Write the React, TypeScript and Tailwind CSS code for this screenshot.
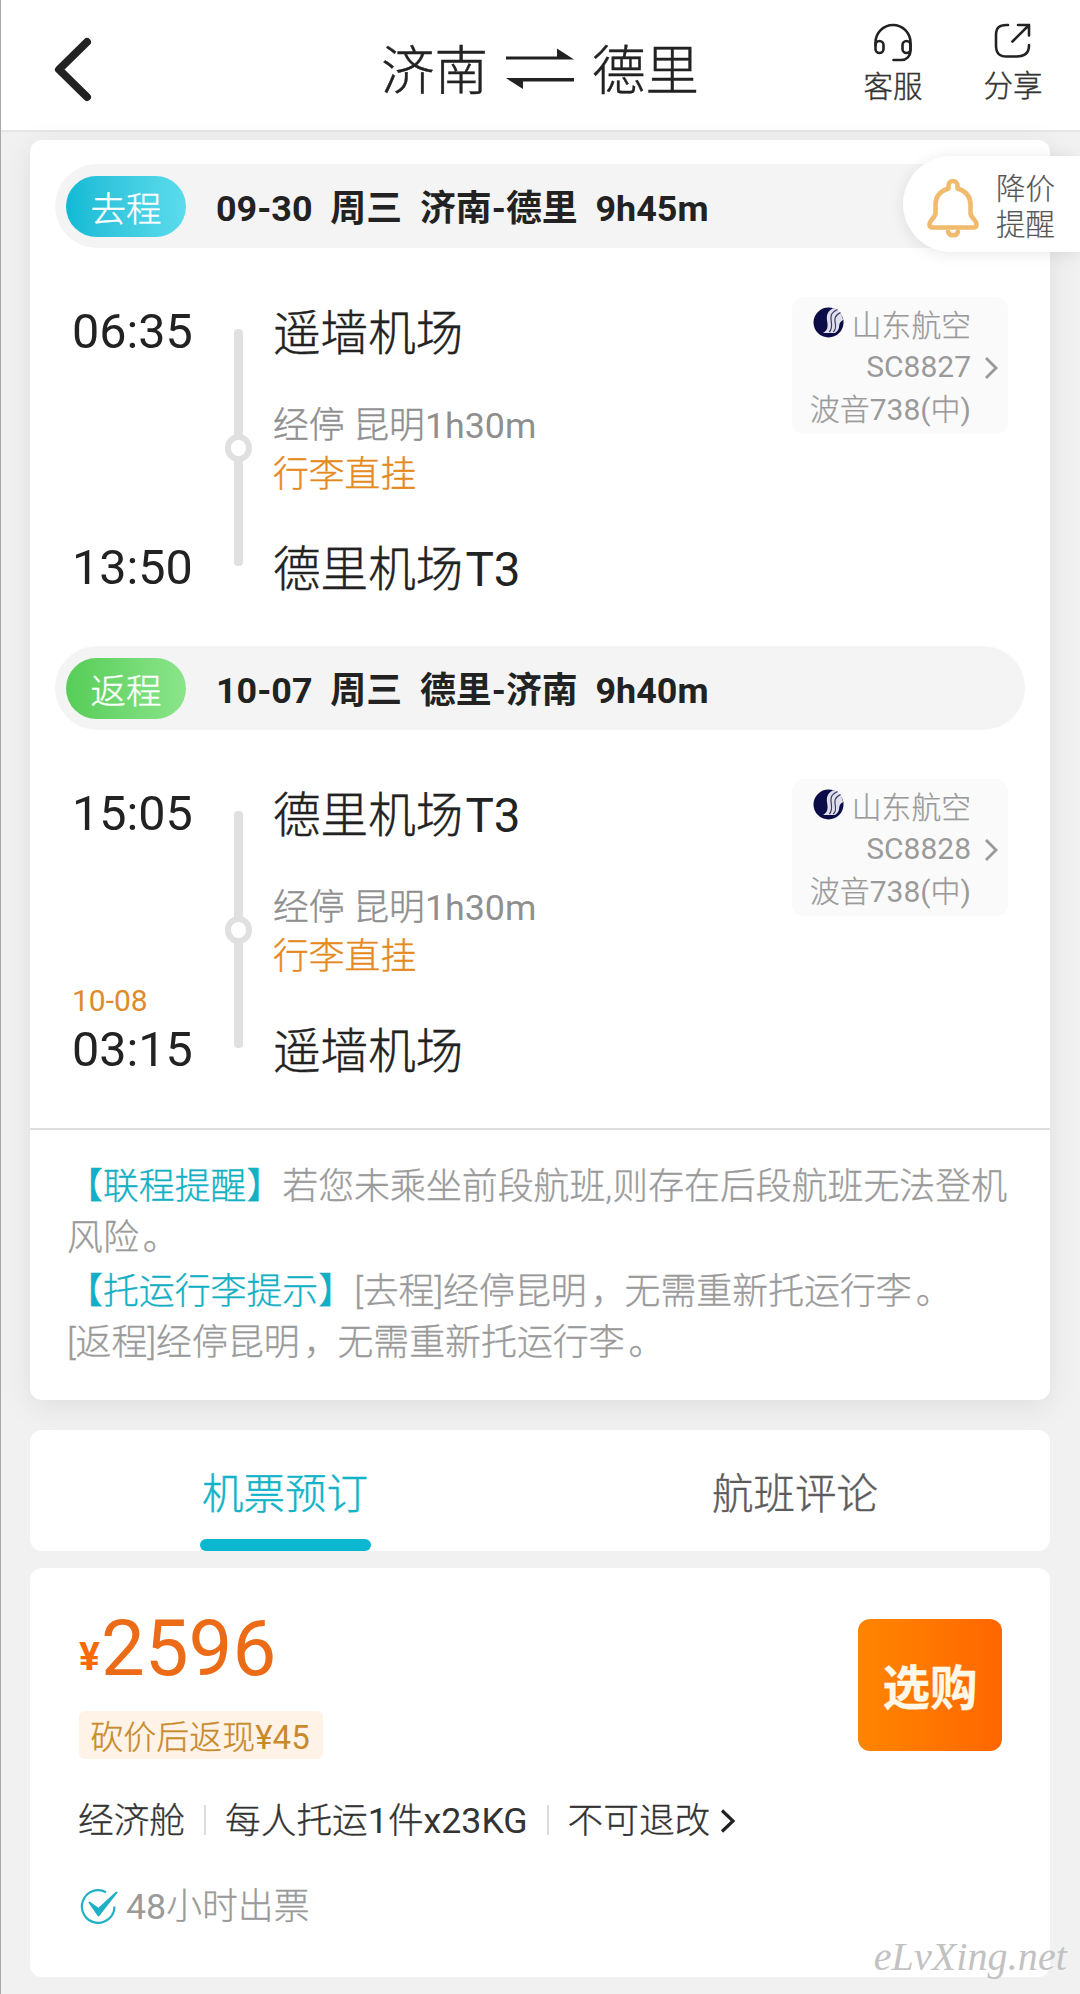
import React from "react";

type Flight = {
  badge: string;
  badgeClass: string;
  date: string;
  day: string;
  from: string;
  to: string;
  duration: string;
  depart: string;
  departAt: string;
  departTerminal?: string;
  arrive: string;
  arriveAt: string;
  arriveTerminal?: string;
  arriveDate?: string;
  flightNo: string;
};

const flights: Flight[] = [
  {
    badge: "去程",
    badgeClass: "bg-gradient-to-r from-[#0bbad5] to-[#5adcec]",
    date: "09-30",
    day: "周三",
    from: "济南",
    to: "德里",
    duration: "9h45m",
    depart: "06:35",
    departAt: "遥墙机场",
    arrive: "13:50",
    arriveAt: "德里机场",
    arriveTerminal: "T3",
    flightNo: "SC8827",
  },
  {
    badge: "返程",
    badgeClass: "bg-gradient-to-r from-[#56cd57] to-[#8ae58a]",
    date: "10-07",
    day: "周三",
    from: "德里",
    to: "济南",
    duration: "9h40m",
    depart: "15:05",
    departAt: "德里机场",
    departTerminal: "T3",
    arrive: "03:15",
    arriveAt: "遥墙机场",
    arriveDate: "10-08",
    flightNo: "SC8828",
  },
];

/* Latin letters and digits set beside the lighter Chinese text */
function L({ children }: { children: React.ReactNode }) {
  return <span className="font-normal [-webkit-text-stroke:0px]">{children}</span>;
}

/* Full-width punctuation, nudged towards the middle of its cell */
function P({ children }: { children: React.ReactNode }) {
  return <span className="mr-[-2px] pl-[4px]">{children}</span>;
}

function Header() {
  return (
    <header className="flex h-[132px] items-start border-b-2 border-[#e6e6e6] bg-white pl-[50px] font-light [-webkit-text-stroke:0.4px]">
      <svg className="mt-[35px] h-[69px] w-[42px] shrink-0" viewBox="0 0 42 69" fill="none" stroke="#222" strokeWidth="8" strokeLinecap="round" strokeLinejoin="round">
        <path d="M36 7 8 34.5 36 62" />
      </svg>
      <div className="mt-[42px] ml-[288px] flex h-[60px] items-center text-[53.5px] leading-[60px] text-[#222]">
        <span className="w-[107px]">济南</span>
        <svg className="mx-[18px] -mt-[7px] h-[42px] w-[68px]" viewBox="0 0 68 42" fill="#222">
          <path d="M0 8.4H51V0.5L68 11.600H0zM68 30.1H0L17 41V33.4H68z" />
        </svg>
        <span className="w-[107px]">德里</span>
      </div>
      <div className="mt-[21px] ml-[164px] flex w-[60px] shrink-0 flex-col items-center text-[29.5px] leading-[40px] text-[#333]">
        <svg className="h-[42px] w-[42px]" viewBox="0 0 42 42" fill="none" stroke="#222" strokeWidth="2.6" strokeLinecap="round">
          <path d="M3.500 24V21.500a17.500 17.500 0 0 1 35 0V30a9 9 0 0 1-9 9h-8" />
          <rect x="3.500" y="20" width="8" height="12" rx="4" />
          <rect x="30.500" y="20" width="8" height="12" rx="4" />
        </svg>
        <span className="mt-[4px]">客服</span>
      </div>
      <div className="mt-[21px] ml-[60px] flex w-[60px] shrink-0 flex-col items-center text-[29.5px] leading-[40px] text-[#333]">
        <svg className="h-[42px] w-[42px]" viewBox="0 0 42 42" fill="none" stroke="#222" strokeWidth="2.6" strokeLinecap="round" strokeLinejoin="round">
          <path d="M16 4h-1.500C7 4 4 7 4 14.500v10C4 32 7 35.500 14.500 35.500h10C33 35.500 37 32 37 24.500V24" />
          <path d="M26 4H37V14.500M37 4 20.500 20.500" />
        </svg>
        <span className="mt-[3px]">分享</span>
      </div>
    </header>
  );
}

function AirlineLogo() {
  return (
    <svg className="h-[31px] w-[31px]" viewBox="0 0 31 31">
      <circle cx="15.500" cy="15.500" r="15" fill="#0c0c48" />
      <path d="M20 1.200C13 5 13.500 10 14.300 15c.8 5.500 0 8.500-4.300 11h12c3-2 4.500-4 5.500-7l3-4C29.500 8 26 2 20 1.200z" fill="#e0e0ea" />
      <g fill="none" stroke="#3a3a6c" strokeWidth="1.200">
        <path d="M24.500 2.500C17 6 17.500 10 18.300 15s.3 7.500-2 10" />
        <path d="M27.500 5.500C21 9 21.500 12 22.300 16.500s.3 6-2 8.500" />
      </g>
      <path d="M30.300 13C26 15 26.500 18 26 20.500s-2.500 5-5 7.500c5-1.500 9.500-6.500 9.300-15z" fill="#0c0c48" />
    </svg>
  );
}

function AirlineBox({ flightNo }: { flightNo: string }) {
  return (
    <div className="mt-[49px] mr-[17px] ml-auto flex h-[137px] w-[216px] items-center rounded-xl bg-[#fafafa] pt-[3px] text-[29.8px] text-[#9a9a9a]">
      <div className="flex w-[179px] flex-col items-end font-light [-webkit-text-stroke:0.25px]">
        <div className="flex h-[43px] items-center gap-[8px] leading-[43px]">
          <div className="-mt-[4px]"><AirlineLogo /></div>
          <span className="pt-[2px]">山东航空</span>
        </div>
        <div className="h-[42px] text-[30px] leading-[41px]"><L>{flightNo}</L></div>
        <div className="h-[43px] text-[30px] leading-[43px]">波音<L>738(</L>中<L>)</L></div>
      </div>
      <svg className="mt-px ml-[13px] h-[24px] w-[16px]" viewBox="0 0 16 24" fill="none" stroke="#999" strokeWidth="2.800">
        <path d="M2 2 12 12 2 22" />
      </svg>
    </div>
  );
}

function FlightSegment({ f }: { f: Flight }) {
  return (
    <section className="px-[25px]">
      <div className="flex h-[84px] items-center rounded-full bg-[#f4f4f4] pl-[11px]">
        <div className={"flex h-[61px] w-[120px] items-center justify-center rounded-full pt-[9px] text-[35.5px] font-light text-white [-webkit-text-stroke:0.4px] " + f.badgeClass}>
          {f.badge}
        </div>
        <div className="ml-[30px] pt-[7px] text-[35.9px] font-bold whitespace-pre text-[#222]">
          {f.date + "  " + f.day + "  " + f.from + "-" + f.to + "  " + f.duration}
        </div>
      </div>
      <div className="flex h-[398px] items-start">
        <div className="mt-[59px] ml-[17px] flex h-[286px] w-[153px] flex-col justify-between text-[48.5px] leading-[50px] text-[#222]">
          <div>{f.depart}</div>
          <div>
            {f.arriveDate && <div className="mb-1 text-[30px] leading-[40px] text-[#e08a2a]">{f.arriveDate}</div>}
            <div>{f.arrive}</div>
          </div>
        </div>
        <div className="mt-[81px] flex h-[237px] w-[27px] flex-col items-center">
          <div className="w-[9px] flex-1 rounded-t-sm bg-[#e0e0e0]" />
          <div className="-my-px h-[28px] w-[27px] rounded-full border-[6px] border-[#e0e0e0] bg-white" />
          <div className="w-[9px] flex-1 rounded-b-sm bg-[#e0e0e0]" />
        </div>
        <div className="mt-[61px] ml-[21px] flex h-[286px] flex-col justify-between font-light text-[#222] [-webkit-text-stroke:0.4px]">
          <div className="text-[47.6px] leading-[50px]">{f.departAt}<L><span className="ml-[2px]">{f.departTerminal}</span></L></div>
          <div className="pb-[2px] text-[35.8px] leading-[49px]">
            <div className="text-[#8f8f8f]">经停 昆明<L>1h30m</L></div>
            <div className="text-[#e58a20]">行李直挂</div>
          </div>
          <div className="text-[47.6px] leading-[50px]">{f.arriveAt}<L><span className="ml-[2px]">{f.arriveTerminal}</span></L></div>
        </div>
        <AirlineBox flightNo={f.flightNo} />
      </div>
    </section>
  );
}

function Notices() {
  return (
    <div className="border-t-2 border-[#dedede] pt-[32px] pl-[37px] text-[35.9px] leading-[51px] font-light whitespace-nowrap text-[#9a9a9a] [-webkit-text-stroke:0.3px] [text-spacing-trim:space-all]">
      <div className="mb-[3px]">
        <p><span className="text-[#13b0c4]">【联程提醒】</span>若您未乘坐前段航班,则存在后段航班无法登机</p>
        <p>风险<P>。</P></p>
      </div>
      <p><span className="text-[#13b0c4]">【托运行李提示】</span>[去程]经停昆明<P>，</P>无需重新托运行李<P>。</P></p>
      <p>[返程]经停昆明<P>，</P>无需重新托运行李<P>。</P></p>
    </div>
  );
}

function PriceAlert() {
  return (
    <div className="absolute top-[156px] right-0 flex h-[96px] w-[177px] items-center rounded-l-full bg-white shadow-[0_2px_16px_rgba(0,0,0,0.09)]">
      <svg className="mt-[7px] ml-[22px] h-[62px] w-[56px]" viewBox="0 0 56 62" fill="none" stroke="#f0bb6c" strokeWidth="4.600" strokeLinecap="round" strokeLinejoin="round">
        <path d="M23.500 11.500V8.500a4.500 4.500 0 0 1 9 0V11.500C41 14 45.500 20 45.500 28V36C45.500 41 51.500 42.500 51.500 47.500 51.500 49.500 50.500 50.500 48.500 50.500H7.500C5.500 50.500 4.500 49.500 4.500 47.500 4.500 42.500 10.500 41 10.500 36V28C10.500 20 15 14 23.500 11.500Z" />
        <path d="M23 54.500c1 5 9 5 10 0" />
      </svg>
      <div className="ml-[15px] pt-[6px] text-[29.5px] leading-[36.5px] font-light text-[#555] [-webkit-text-stroke:0.2px]">
        <div>降价</div>
        <div>提醒</div>
      </div>
    </div>
  );
}

function Tabs() {
  return (
    <nav className="mx-[30px] mt-[30px] flex h-[121px] rounded-xl bg-white text-[41.5px] font-light [-webkit-text-stroke:0.4px]">
      <div className="flex flex-1 flex-col items-center justify-between pt-[37px] text-[#12b3c8]">
        <span className="leading-[56px]">机票预订</span>
        <div className="h-[12px] w-[171px] rounded-full bg-[#0bb8d0]" />
      </div>
      <div className="flex flex-1 flex-col items-center pt-[37px] text-[#5c5c5c]">
        <span className="leading-[56px]">航班评论</span>
      </div>
    </nav>
  );
}

function Offer() {
  return (
    <section className="mx-[30px] mt-[17px] flex h-[409px] items-start justify-between rounded-xl bg-white pr-[48px] pl-[48px] font-light [-webkit-text-stroke:0.3px]">
      <div>
        <div className="mt-[40px] ml-px flex h-[82px] items-baseline text-[#ec6b16] [-webkit-text-stroke:0px]">
          <span className="relative -top-[5px] text-[39px] leading-[82px] font-bold text-[#f96a05]">¥</span>
          <span className="ml-[1px] text-[78px] leading-[82px] font-normal">2596</span>
        </div>
        <div className="mt-[21px] ml-px flex h-[48px] w-[244px] items-center justify-center rounded-md bg-[#fef3e6] pt-[5px] pr-[2px] text-[33px] text-[#c98a2c]">
          <span className="leading-[43px]">砍价后返现<L>¥45</L></span>
        </div>
        <div className="mt-[37px] flex h-[50px] items-center text-[35.700px] leading-[50px] text-[#333]">
          <span>经济舱</span>
          <i className="mx-[19px] mt-[-3px] h-[30px] w-[2px] bg-[#dcdcdc]" />
          <span>每人托运<L>1</L>件<L>x23KG</L></span>
          <i className="mx-[19px] mt-[-3px] h-[30px] w-[2px] bg-[#dcdcdc]" />
          <span>不可退改</span>
          <svg className="ml-[9px] h-[26px] w-[18px]" viewBox="0 0 18 26" fill="none" stroke="#222" strokeWidth="3.200">
            <path d="M3 2.500 14 13 3 23.500" />
          </svg>
        </div>
        <div className="mt-[36px] flex h-[50px] items-center text-[35.800px] leading-[50px] text-[#9a9a9a]">
          <svg className="ml-[2px] h-[38px] w-[38px]" viewBox="0 0 38 38" fill="none" stroke="#1fb0c5" strokeWidth="2.200">
            <path d="M26 4.200A16.300 16.300 0 1 0 34.500 18.500" />
            <path d="M9.500 14.500 18.500 21 36.500 4.500 18.500 27.500Z" fill="#1fb0c5" strokeWidth="2" strokeLinejoin="round" />
          </svg>
          <span className="ml-[8px]"><L>48</L>小时出票</span>
        </div>
      </div>
      <button className="mt-[51px] flex h-[132px] w-[144px] items-center justify-center rounded-xl bg-gradient-to-r from-[#ff8500] to-[#ff6600] pt-[9px] text-[47.5px] font-bold text-[#fff8e8]">
        选购
      </button>
    </section>
  );
}

export default function App() {
  return (
    <div className="relative h-[1994px] w-[1080px] overflow-hidden border-l border-[#a8a8a8] bg-[#f1f1f1] font-['Roboto','Noto_Sans_CJK_SC',sans-serif]">
      <Header />
      <div className="-ml-px">
        <main className="relative mx-[30px] mt-2 h-[1260px] rounded-xl bg-white pt-6 shadow-[0_6px_32px_rgba(0,0,0,0.08)]">
          {flights.map((f) => (
            <FlightSegment key={f.flightNo} f={f} />
          ))}
          <Notices />
        </main>
        <Tabs />
        <Offer />
      </div>
      <PriceAlert />
      <div className="absolute right-[13px] bottom-[16px] font-['Liberation_Serif',serif] text-[40px] leading-[42px] tracking-[0.1px] text-[#c2c2c2] italic">
        eLvXing.net
      </div>
    </div>
  );
}
